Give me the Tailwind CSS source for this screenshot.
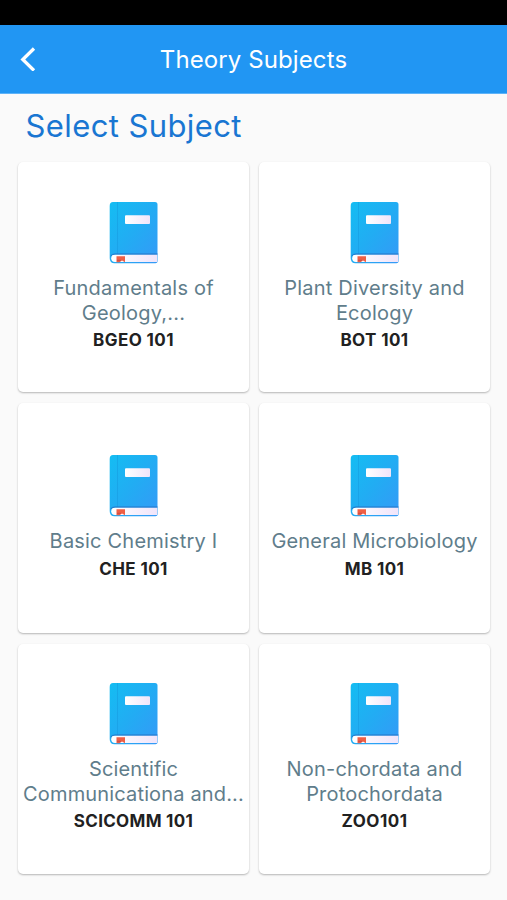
<!DOCTYPE html>
<html lang="en">
<head>
<meta charset="utf-8">
<meta name="viewport" content="width=device-width, initial-scale=1">
<title>Theory Subjects</title>
<script src="https://cdn.jsdelivr.net/npm/@tailwindcss/browser@4"></script>
</head>
<body class="bg-[#fafafa] font-['Inter','Liberation_Sans',sans-serif]">
<svg class="absolute h-0 w-0" aria-hidden="true">
  <defs>
    <linearGradient id="cover" x1="0" y1="0" x2="1" y2="1"><stop offset="0" stop-color="#14bdf2"/><stop offset=".5" stop-color="#22acf3"/><stop offset="1" stop-color="#3599f7"/></linearGradient>
    <linearGradient id="paper" x1="0" y1="0" x2="1" y2="0"><stop offset="0" stop-color="#ffffff"/><stop offset="1" stop-color="#f0e4fa"/></linearGradient>
  </defs>
  <symbol id="book" viewBox="0 0 50 62">
    <path d="M4 0H46Q48.500 0 48.500 2.500V59.500Q48.500 61.300 46.500 61.300H5.500Q.7 61.300 .7 56V4Q.7 0 4 0Z" fill="url(#cover)"/>
    <path d="M8.500 0V52" stroke="#1593d8" stroke-width=".8" opacity=".5"/>
    <path d="M6 52.500H48V60H6Q2.200 60 2.200 56.300T6 52.500Z" fill="url(#paper)"/>
    <path d="M1.500 54Q3 52 6 52H48.500" fill="none" stroke="#2374c8" stroke-width="1"/>
    <path d="M7.500 54.300H16V60.300L13 58.500L10.500 60.300H7.500Z" fill="#ef5f45"/>
    <path d="M8 58.300H12" stroke="#c84a48" stroke-width="1"/>
    <rect x="16" y="13.200" width="25" height="8.800" rx="1" fill="url(#paper)"/>
  </symbol>
</svg>
<div class="h-[900px] w-[507px] overflow-hidden">
  <div class="h-[25px] bg-black"></div>
  <header class="grid h-[69px] grid-cols-[56px_1fr_56px] items-center border-b border-[#5eb3f8] bg-[#2196f3] text-white">
    <svg class="ml-5 h-6 w-4" viewBox="0 0 16 24" fill="none" stroke="currentColor" stroke-width="3.300"><path d="M14 1.500L2.800 12.500L14 23.500"/></svg>
    <h1 class="pt-[2px] text-center text-[24px] leading-[30px] tracking-[0.1px]">Theory Subjects</h1>
  </header>
  <h2 class="h-[68px] pt-[12px] pl-[25.500px] text-[31px] leading-[40px] tracking-[0.4px] text-[#1976d2]">Select Subject</h2>
  <main class="grid grid-cols-[231px_231px] grid-rows-[229.500px_229.500px_229.500px] gap-x-[10px] gap-y-[11.500px] pl-[18px] text-center text-[20px] leading-[24.500px] tracking-[0.2px] text-[#607d8b]">
    <article class="flex flex-col items-center rounded-[5px] bg-white pt-[40px] shadow-[0_1px_2px_rgba(0,0,0,0.28)]">
      <svg class="h-[62px] w-[50px]"><use href="#book"/></svg>
      <h3 class="mt-[12px]">Fundamentals of<br>Geology,...</h3>
      <p class="mt-[3px] text-[17px] font-bold tracking-[0.400px] text-[#212121]">BGEO 101</p>
    </article>
    <article class="flex flex-col items-center rounded-[5px] bg-white pt-[40px] shadow-[0_1px_2px_rgba(0,0,0,0.28)]">
      <svg class="h-[62px] w-[50px]"><use href="#book"/></svg>
      <h3 class="mt-[12px]">Plant Diversity and<br>Ecology</h3>
      <p class="mt-[3px] text-[17px] font-bold tracking-[0.400px] text-[#212121]">BOT 101</p>
    </article>
    <article class="flex flex-col items-center rounded-[5px] bg-white pt-[52px] shadow-[0_1px_2px_rgba(0,0,0,0.28)]">
      <svg class="h-[62px] w-[50px]"><use href="#book"/></svg>
      <h3 class="mt-[12px]">Basic Chemistry I</h3>
      <p class="mt-[3px] text-[17px] font-bold tracking-[0.400px] text-[#212121]">CHE 101</p>
    </article>
    <article class="flex flex-col items-center rounded-[5px] bg-white pt-[52px] shadow-[0_1px_2px_rgba(0,0,0,0.28)]">
      <svg class="h-[62px] w-[50px]"><use href="#book"/></svg>
      <h3 class="mt-[12px]">General Microbiology</h3>
      <p class="mt-[3px] text-[17px] font-bold tracking-[0.400px] text-[#212121]">MB 101</p>
    </article>
    <article class="flex flex-col items-center rounded-[5px] bg-white pt-[39px] shadow-[0_1px_2px_rgba(0,0,0,0.28)]">
      <svg class="h-[62px] w-[50px]"><use href="#book"/></svg>
      <h3 class="mt-[12px] whitespace-nowrap tracking-[0.150px]">Scientific<br>Communicationa and...</h3>
      <p class="mt-[3px] text-[17px] font-bold tracking-[0.300px] text-[#212121]">SCICOMM 101</p>
    </article>
    <article class="flex flex-col items-center rounded-[5px] bg-white pt-[39px] shadow-[0_1px_2px_rgba(0,0,0,0.28)]">
      <svg class="h-[62px] w-[50px]"><use href="#book"/></svg>
      <h3 class="mt-[12px]">Non-chordata and<br>Protochordata</h3>
      <p class="mt-[3px] text-[17px] font-bold tracking-[0.500px] text-[#212121]">ZOO101</p>
    </article>
  </main>
</div>
</body>
</html>
